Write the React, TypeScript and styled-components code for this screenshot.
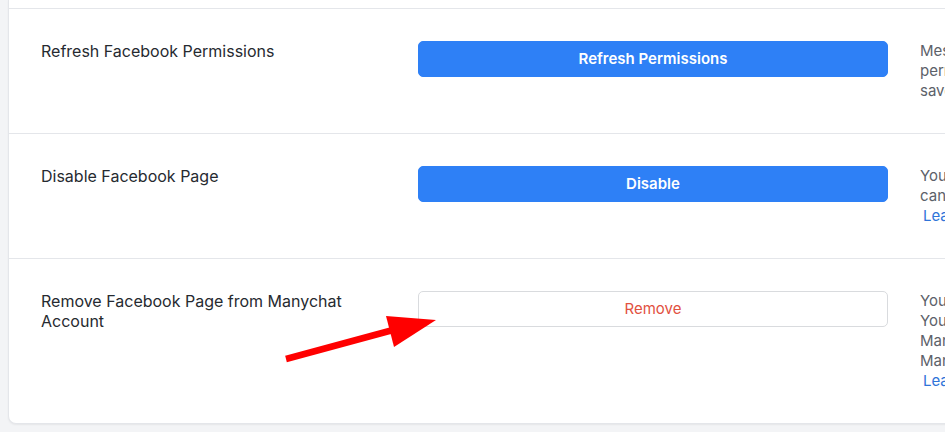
import React from "react";
import styled, { createGlobalStyle } from "styled-components";

const Global = createGlobalStyle`
  html, body {
    margin: 0;
    padding: 0;
    background: #f3f4f6;
    overflow: hidden;
  }
  body {
    font-family: Inter, "Noto Sans", sans-serif;
    -webkit-font-smoothing: antialiased;
  }
`;

const Page = styled.div`
  width: 945px;
  height: 432px;
  padding: 0 0 9px 8px;
  box-sizing: border-box;
  overflow: hidden;
`;

const Card = styled.div`
  width: 1400px;
  background: #ffffff;
  border: 1px solid #e4e6ea;
  border-top: none;
  border-radius: 0 0 8px 8px;
  box-shadow: 0 1px 2px rgba(0, 0, 0, 0.06);
`;

const TopStub = styled.div`
  height: 8px;
  border-bottom: 1px solid #e4e6ea;
`;

const Row = styled.div<{ $last?: boolean }>`
  position: relative;
  display: grid;
  grid-template-columns: 345px 470px 420px;
  column-gap: 32px;
  align-items: start;
  padding: 32px 0 32px 32px;
  border-bottom: ${(p) => (p.$last ? "none" : "1px solid #e4e6ea")};
`;

const Label = styled.div`
  font-size: 16px;
  line-height: 20px;
  color: #262a30;
`;

const Button = styled.button<{ $variant: "primary" | "danger" }>`
  display: flex;
  align-items: center;
  justify-content: center;
  width: 470px;
  height: 36px;
  padding: 0 0 2px;
  border-radius: 5px;
  font-family: Inter, "Noto Sans", sans-serif;
  font-size: 15px;
  cursor: pointer;
  box-sizing: border-box;
  ${(p) =>
    p.$variant === "primary"
      ? `
    background: #2e80f6;
    border: 1px solid #2e80f6;
    color: #ffffff;
    font-weight: 600;
  `
      : `
    background: #ffffff;
    border: 1px solid #d9dbde;
    color: #e2513f;
    font-weight: 400;
  `}
`;

const Description = styled.div`
  font-size: 15px;
  line-height: 20px;
  color: #5c6169;
  white-space: nowrap;
`;

const Line = styled.div``;

const Link = styled.a`
  display: block;
  color: #2f74d9;
  text-decoration: none;
  padding-left: 3px;
`;

const ArrowSvg = styled.svg`
  position: absolute;
  left: 276px;
  top: 50px;
  width: 165px;
  height: 56px;
  pointer-events: none;
`;

const Arrow = () => (
  <ArrowSvg viewBox="0 0 165 56">
    <line x1="1" y1="50" x2="108" y2="21" stroke="#ff0000" strokeWidth="6.5" />
    <polygon points="101,7 151,11 109,38" fill="#ff0000" />
  </ArrowSvg>
);

export default function App() {
  return (
    <>
      <Global />
      <Page>
        <Card>
          <TopStub />
          <Row>
            <Label>Refresh Facebook Permissions</Label>
            <Button $variant="primary">Refresh Permissions</Button>
            <Description>
              <Line>Messenger may ask you to grant the page</Line>
              <Line>permissions again. Your settings will be</Line>
              <Line>saved.</Line>
            </Description>
          </Row>
          <Row>
            <Label>Disable Facebook Page</Label>
            <Button $variant="primary">Disable</Button>
            <Description>
              <Line>You can disable the page temporarily. You</Line>
              <Line>can enable it again at any time.</Line>
              <Link href="#">Learn more</Link>
            </Description>
          </Row>
          <Row $last>
            <Label>Remove Facebook Page from Manychat Account</Label>
            <Button $variant="danger">Remove</Button>
            <Description>
              <Line>You will lose access to all page data.</Line>
              <Line>You can connect this page to another</Line>
              <Line>Manychat account later. Removing it from</Line>
              <Line>Manychat cannot be undone.</Line>
              <Link href="#">Learn more</Link>
            </Description>
            <Arrow />
          </Row>
        </Card>
      </Page>
    </>
  );
}
